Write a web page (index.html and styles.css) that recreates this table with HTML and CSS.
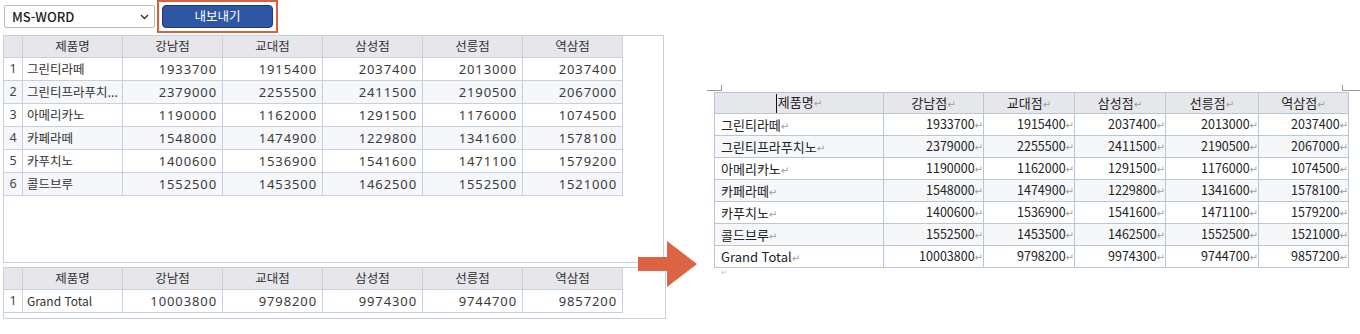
FILE: index.html
```html
<!DOCTYPE html>
<html lang="ko">
<head>
<meta charset="utf-8">
<title>Export</title>
<link rel="stylesheet" href="styles.css">
</head>
<body>
<div class="screen">
  <section class="left">
    <div class="toolbar">
      <div class="select">
        <span>MS-WORD</span>
        <svg class="chev" width="9" height="6" viewBox="0 0 9 6"><path d="M1 1l3.5 3.5L8 1" fill="none" stroke="#333" stroke-width="1.4"/></svg>
      </div>
      <div class="highlight"><button class="export">내보내기</button></div>
    </div>

    <div class="grid grid-main">
      <table class="gtable">
        <thead>
          <tr><th class="rn"></th><th>제품명</th><th>강남점</th><th>교대점</th><th>삼성점</th><th>선릉점</th><th>역삼점</th></tr>
        </thead>
        <tbody>
          <tr><td class="rn">1</td><td class="nm">그린티라떼</td><td class="num">1933700</td><td class="num">1915400</td><td class="num">2037400</td><td class="num">2013000</td><td class="num">2037400</td></tr>
          <tr class="alt"><td class="rn">2</td><td class="nm" title="그린티프라푸치노">그린티프라푸치...</td><td class="num">2379000</td><td class="num">2255500</td><td class="num">2411500</td><td class="num">2190500</td><td class="num">2067000</td></tr>
          <tr><td class="rn">3</td><td class="nm">아메리카노</td><td class="num">1190000</td><td class="num">1162000</td><td class="num">1291500</td><td class="num">1176000</td><td class="num">1074500</td></tr>
          <tr class="alt"><td class="rn">4</td><td class="nm">카페라떼</td><td class="num">1548000</td><td class="num">1474900</td><td class="num">1229800</td><td class="num">1341600</td><td class="num">1578100</td></tr>
          <tr><td class="rn">5</td><td class="nm">카푸치노</td><td class="num">1400600</td><td class="num">1536900</td><td class="num">1541600</td><td class="num">1471100</td><td class="num">1579200</td></tr>
          <tr class="alt"><td class="rn">6</td><td class="nm">콜드브루</td><td class="num">1552500</td><td class="num">1453500</td><td class="num">1462500</td><td class="num">1552500</td><td class="num">1521000</td></tr>
        </tbody>
      </table>
    </div>

    <div class="grid grid-total">
      <table class="gtable">
        <thead>
          <tr><th class="rn"></th><th>제품명</th><th>강남점</th><th>교대점</th><th>삼성점</th><th>선릉점</th><th>역삼점</th></tr>
        </thead>
        <tbody>
          <tr><td class="rn">1</td><td class="nm latin">Grand Total</td><td class="num">10003800</td><td class="num">9798200</td><td class="num">9974300</td><td class="num">9744700</td><td class="num">9857200</td></tr>
        </tbody>
      </table>
    </div>
  </section>

  <svg class="arrow" width="64" height="52" viewBox="0 0 64 52"><polygon points="2,19 31,19 31,3 61,26 31,49 31,33 2,33" fill="#dc6443"/></svg>

  <section class="doc">
    <span class="corner corner-tl"></span>
    <span class="corner corner-tr"></span>
    <table class="wtable">
      <thead>
        <tr><th class="w1"><span class="caret"></span>제품명<i>↵</i></th><th class="w2">강남점<i>↵</i></th><th class="w3">교대점<i>↵</i></th><th class="w4">삼성점<i>↵</i></th><th class="w5">선릉점<i>↵</i></th><th class="w6">역삼점<i>↵</i></th></tr>
      </thead>
      <tbody>
        <tr><td>그린티라떼<i>↵</i></td><td class="num">1933700<i>↵</i></td><td class="num">1915400<i>↵</i></td><td class="num">2037400<i>↵</i></td><td class="num">2013000<i>↵</i></td><td class="num">2037400<i>↵</i></td></tr>
        <tr class="alt"><td>그린티프라푸치노<i>↵</i></td><td class="num">2379000<i>↵</i></td><td class="num">2255500<i>↵</i></td><td class="num">2411500<i>↵</i></td><td class="num">2190500<i>↵</i></td><td class="num">2067000<i>↵</i></td></tr>
        <tr><td>아메리카노<i>↵</i></td><td class="num">1190000<i>↵</i></td><td class="num">1162000<i>↵</i></td><td class="num">1291500<i>↵</i></td><td class="num">1176000<i>↵</i></td><td class="num">1074500<i>↵</i></td></tr>
        <tr class="alt"><td>카페라떼<i>↵</i></td><td class="num">1548000<i>↵</i></td><td class="num">1474900<i>↵</i></td><td class="num">1229800<i>↵</i></td><td class="num">1341600<i>↵</i></td><td class="num">1578100<i>↵</i></td></tr>
        <tr><td>카푸치노<i>↵</i></td><td class="num">1400600<i>↵</i></td><td class="num">1536900<i>↵</i></td><td class="num">1541600<i>↵</i></td><td class="num">1471100<i>↵</i></td><td class="num">1579200<i>↵</i></td></tr>
        <tr class="alt"><td>콜드브루<i>↵</i></td><td class="num">1552500<i>↵</i></td><td class="num">1453500<i>↵</i></td><td class="num">1462500<i>↵</i></td><td class="num">1552500<i>↵</i></td><td class="num">1521000<i>↵</i></td></tr>
        <tr><td>Grand Total<i>↵</i></td><td class="num">10003800<i>↵</i></td><td class="num">9798200<i>↵</i></td><td class="num">9974300<i>↵</i></td><td class="num">9744700<i>↵</i></td><td class="num">9857200<i>↵</i></td></tr>
      </tbody>
    </table>
    <div class="para-end">↵</div>
  </section>
</div>
</body>
</html>
```

FILE: styles.css
```css
* { box-sizing: border-box; }

body {
  margin: 0;
  width: 1360px;
  height: 334px;
  overflow: hidden;
  background: #fff;
  font-family: "Noto Sans CJK KR", "Noto Sans", sans-serif;
  color: #333;
}

.screen {
  position: relative;
  display: flex;
  height: 334px;
}

/* ---------- left: grid widget ---------- */
.left {
  flex: none;
  width: 666px;
  padding-left: 3px;
}

.toolbar {
  display: flex;
  align-items: flex-start;
  height: 35px;
}

.select {
  margin: 5px 0 0 1px;
  width: 151px;
  height: 23px;
  border: 1px solid #bdbdbd;
  border-radius: 2px;
  display: flex;
  align-items: center;
  justify-content: space-between;
  padding: 0 5px 0 7px;
  font-size: 13px;
  font-weight: 500;
  line-height: 1;
  color: #222;
}

.chev { display: block; }

.highlight {
  margin-left: 2px;
  border: 2px solid #d9603b;
  padding: 3px;
}

.export {
  display: block;
  width: 111px;
  height: 23px;
  padding: 0;
  background: #2e56a3;
  border: 1px solid #1d3b78;
  border-radius: 4px;
  color: #fff;
  font-family: "Noto Sans CJK KR", sans-serif;
  font-size: 12.5px;
  line-height: 1;
}

.grid {
  border: 1px solid #c5d1dd;
  background: #fff;
}

.grid-main { width: 661px; height: 228px; }
.grid-total { width: 663px; height: 52px; margin-top: 4px; }

.gtable {
  border-collapse: separate;
  border-spacing: 0;
  table-layout: fixed;
  width: 619px;
  font-size: 12.5px;
}

.gtable th,
.gtable td {
  width: 100px;
  border-right: 1px solid #c5d1dd;
  border-bottom: 1px solid #c5d1dd;
  padding: 0 4px;
  white-space: nowrap;
  overflow: hidden;
  line-height: 1;
}

.gtable th {
  height: 22px;
  background: #e6e6eb;
  font-weight: normal;
  text-align: center;
  color: #333;
}

.gtable td { height: 23px; }

.gtable .rn {
  width: 19px;
  padding: 0;
  text-align: center;
  color: #444;
  font-family: "Noto Sans", sans-serif;
  font-size: 12.5px;
}

.gtable .nm { padding: 0 1px 0 4px; }

.gtable .latin { font-size: 12px; }

.gtable .num {
  text-align: right;
  font-family: "Noto Sans", sans-serif;
  font-size: 13px;
  letter-spacing: 0.9px;
  padding-right: 5px;
  color: #3a3a3a;
}

.gtable .alt td { background: #f5f7fa; }

/* ---------- arrow ---------- */
.arrow {
  position: absolute;
  left: 636px;
  top: 238px;
}

/* ---------- right: word document ---------- */
.doc {
  position: relative;
  flex: none;
  width: 694px;
  padding: 92px 0 0 48px;
}

.corner {
  position: absolute;
  top: 85px;
  height: 6px;
  border-bottom: 1px solid #9a9a9a;
}

.corner-tl { left: 41px; width: 15px; border-right: 1px solid #9a9a9a; }
.corner-tr { left: 676px; width: 20px; border-left: 1px solid #9a9a9a; }

.wtable {
  border-collapse: separate;
  border-spacing: 0;
  table-layout: fixed;
  width: 635px;
  border-left: 1px solid #b7c7d7;
  border-top: 1px solid #b7c7d7;
  font-size: 13px;
  color: #222;
}

.wtable th,
.wtable td {
  border-right: 1px solid #b7c7d7;
  border-bottom: 1px solid #b7c7d7;
  height: 22px;
  padding: 0 0 0 6px;
  white-space: nowrap;
  overflow: hidden;
  line-height: 1;
}

.wtable th {
  height: 21px;
  background: #e6e7ea;
  font-weight: normal;
  text-align: center;
  padding: 0;
}

.wtable .w1 { width: 169px; }
.wtable .w2 { width: 100px; }
.wtable .w3 { width: 91px; }
.wtable .w4 { width: 91px; }
.wtable .w5 { width: 93px; }
.wtable .w6 { width: 90px; }

.wtable .num { text-align: right; padding: 0; font-size: 12.5px; }

.wtable .alt td { background: #f6f7f9; }

.wtable i {
  font-style: normal;
  font-family: "DejaVu Sans", sans-serif;
  font-size: 10px;
  color: #9c9c9c;
}

.caret {
  display: inline-block;
  width: 1px;
  height: 19px;
  background: #111;
  vertical-align: middle;
  margin-right: 1px;
}

.para-end {
  margin: 1px 0 0 7px;
  font-family: "DejaVu Sans", sans-serif;
  font-size: 8px;
  color: #c8c8c8;
  line-height: 1;
}
```
